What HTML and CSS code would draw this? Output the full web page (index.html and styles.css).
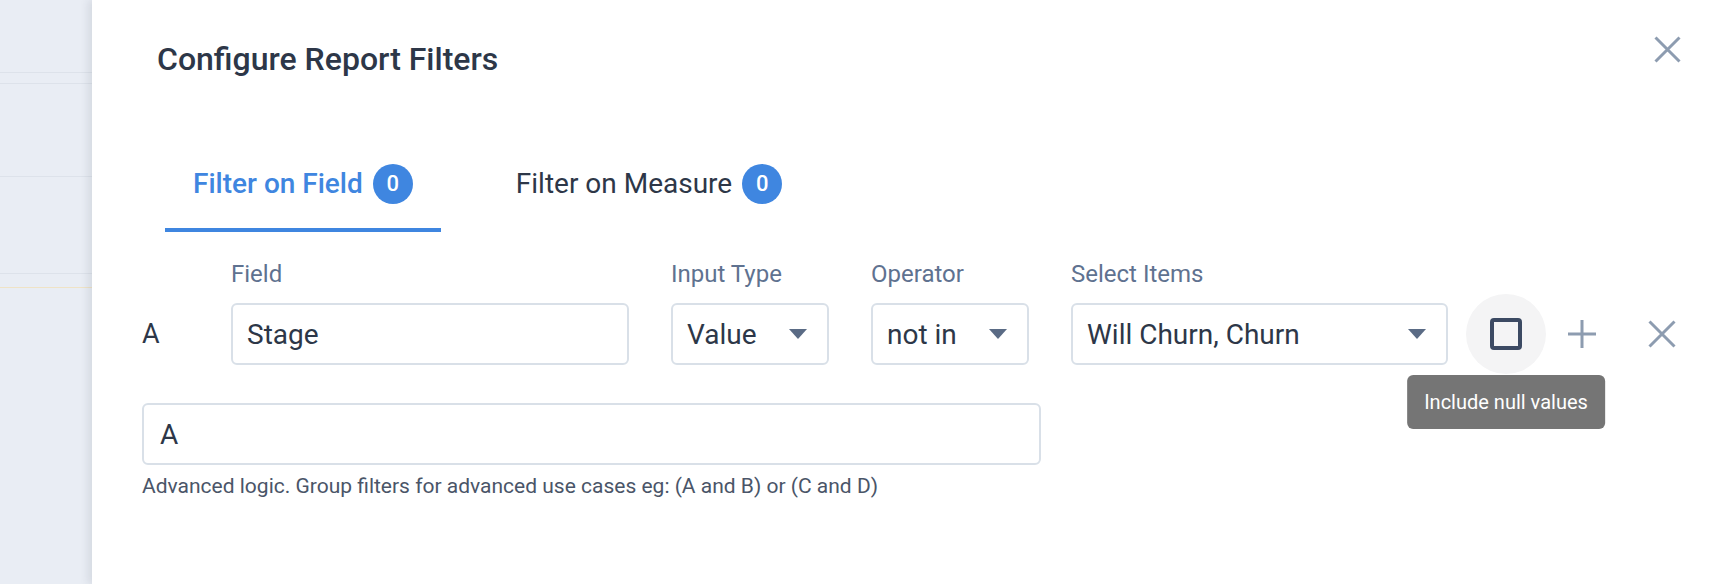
FILE: index.html
```html
<!DOCTYPE html>
<html>
<head>
<meta charset="utf-8">
<link rel="stylesheet" href="styles.css">
</head>
<body>
<div class="page">
  <aside class="sidebar">
    <div class="sb-row sb-r1"></div>
    <div class="sb-row sb-r2"></div>
    <div class="sb-row sb-r3"></div>
    <div class="sb-row sb-r4"></div>
    <div class="sb-row sb-r5"></div>
  </aside>
  <main class="drawer">
    <header class="header">
      <h1 class="title">Configure Report Filters</h1>
      <button class="close-btn" aria-label="Close">
        <svg width="27" height="27" viewBox="0 0 27 27"><path d="M1.5 1.5 L25.5 25.5 M25.5 1.5 L1.5 25.5" stroke="#8d9cb0" stroke-width="3" fill="none"/></svg>
      </button>
    </header>

    <nav class="tabs">
      <div class="tab tab-active">
        <span class="tab-label">Filter on Field</span>
        <span class="badge">0</span>
      </div>
      <div class="tab">
        <span class="tab-label">Filter on Measure</span>
        <span class="badge">0</span>
      </div>
    </nav>

    <div class="filter-row">
      <div class="fields">
        <div class="col col-letter">
          <div class="label">&nbsp;</div>
          <div class="letter">A</div>
        </div>
        <div class="col col-field">
          <div class="label">Field</div>
          <div class="input">Stage</div>
        </div>
        <div class="col col-type">
          <div class="label">Input Type</div>
          <div class="input select"><span>Value</span><span class="caret"></span></div>
        </div>
        <div class="col col-op">
          <div class="label">Operator</div>
          <div class="input select"><span>not in</span><span class="caret"></span></div>
        </div>
        <div class="col col-items">
          <div class="label">Select Items</div>
          <div class="input select select-items"><span>Will Churn, Churn</span><span class="caret"></span></div>
        </div>
      </div>
      <div class="actions">
        <div class="null-toggle">
          <span class="checkbox"></span>
          <div class="tooltip">Include null values</div>
        </div>
        <button class="icon-btn add-btn" aria-label="Add">
          <svg width="28" height="28" viewBox="0 0 28 28"><path d="M14 0 V28 M0 14 H28" stroke="#8d9cb0" stroke-width="3" fill="none"/></svg>
        </button>
        <button class="icon-btn remove-btn" aria-label="Remove">
          <svg width="28" height="28" viewBox="0 0 28 28"><path d="M1.5 1.5 L26.5 26.5 M26.5 1.5 L1.5 26.5" stroke="#8d9cb0" stroke-width="3" fill="none"/></svg>
        </button>
      </div>
    </div>

    <div class="logic">
      <div class="input logic-input">A</div>
      <p class="hint">Advanced logic. Group filters for advanced use cases eg: (A and B) or (C and D)</p>
    </div>
  </main>
</div>
</body>
</html>
```

FILE: styles.css
```css
* { box-sizing: border-box; }
html, body { margin: 0; padding: 0; }
body {
  font-family: Roboto, "Liberation Sans", Arial, sans-serif;
  color: #2d3748;
  background: #ffffff;
}
.page {
  display: flex;
  width: 1728px;
  height: 584px;
  overflow: hidden;
}
.sidebar {
  width: 92px;
  flex: 0 0 92px;
  background: #e9edf4;
  display: flex;
  flex-direction: column;
}
.sb-row { border-bottom: 1px solid #dde2ea; }
.sb-r1 { height: 73px; }
.sb-r2 { height: 11px; }
.sb-r3 { height: 93px; }
.sb-r4 { height: 97px; }
.sb-r5 { height: 14px; border-bottom: 1px solid #efe3c6; }

.drawer {
  flex: 1;
  background: #fff;
  box-shadow: -4px 0 8px rgba(40, 50, 70, 0.10);
  padding: 0 47px 0 50px;
  position: relative;
  z-index: 1;
}
.header {
  display: flex;
  justify-content: space-between;
  align-items: flex-start;
  padding-top: 36px;
}
.title {
  margin: 3px 0 0 15px;
  font-size: 32px;
  line-height: 40px;
  font-weight: 500;
  color: #2d3748;
}
.close-btn, .icon-btn {
  border: 0;
  background: none;
  padding: 0;
  margin: 0;
  display: flex;
  cursor: pointer;
}
.tabs {
  display: flex;
  margin-top: 85px;
  margin-left: 23px;
  gap: 47px;
}
.tab {
  display: flex;
  align-items: center;
  gap: 10px;
  padding: 0 28px 24px;
  border-bottom: 4px solid transparent;
  font-size: 28px;
  line-height: 40px;
  color: #2d3748;
}
.tab-active {
  border-bottom-color: #3f86e0;
  color: #3f86e0;
  font-weight: 500;
}
.badge {
  width: 40px;
  height: 40px;
  border-radius: 50%;
  background: #3f86e0;
  color: #fff;
  font-size: 22px;
  font-weight: 500;
  display: flex;
  align-items: center;
  justify-content: center;
}

.filter-row {
  display: flex;
  align-items: flex-end;
  margin-top: 28px;
}
.fields {
  display: flex;
  gap: 42px;
}
.col { display: flex; flex-direction: column; }
.col-letter { width: 47px; }
.col-field { width: 398px; }
.col-type { width: 158px; }
.col-op { width: 158px; }
.col-items { width: 377px; }
.label {
  font-size: 24px;
  line-height: 28px;
  color: #5f7290;
  margin-bottom: 15px;
}
.letter {
  height: 62px;
  display: flex;
  align-items: center;
  font-size: 27px;
  color: #2d3748;
}
.input {
  height: 62px;
  border: 2px solid #d9e0e8;
  border-radius: 6px;
  padding: 0 20px 0 14px;
  display: flex;
  align-items: center;
  font-size: 28px;
  color: #2d3748;
  background: #fff;
}
.select { justify-content: space-between; }
.caret {
  width: 0;
  height: 0;
  border-left: 9px solid transparent;
  border-right: 9px solid transparent;
  border-top: 10px solid #5a6b85;
}
.select-items { padding-right: 20px; }

.actions {
  display: flex;
  align-items: center;
  height: 62px;
  margin-left: 18px;
}
.null-toggle {
  position: relative;
  width: 80px;
  height: 80px;
  border-radius: 50%;
  background: #f4f4f5;
  display: flex;
  align-items: center;
  justify-content: center;
}
.checkbox {
  width: 32px;
  height: 32px;
  border: 4px solid #3c4a63;
  border-radius: 4px;
}
.tooltip {
  position: absolute;
  top: 81px;
  left: 50%;
  transform: translateX(-50%);
  background: #757575;
  color: #fff;
  font-size: 20px;
  line-height: 24px;
  padding: 15px 17px;
  border-radius: 6px;
  white-space: nowrap;
}
.add-btn { margin-left: 22px; }
.remove-btn { margin-left: 52px; }

.logic {
  margin-top: 38px;
  width: 899px;
}
.logic-input { padding-left: 16px; }
.hint {
  margin: 9px 0 0;
  font-size: 21px;
  line-height: 24px;
  color: #4a5568;
}
```
